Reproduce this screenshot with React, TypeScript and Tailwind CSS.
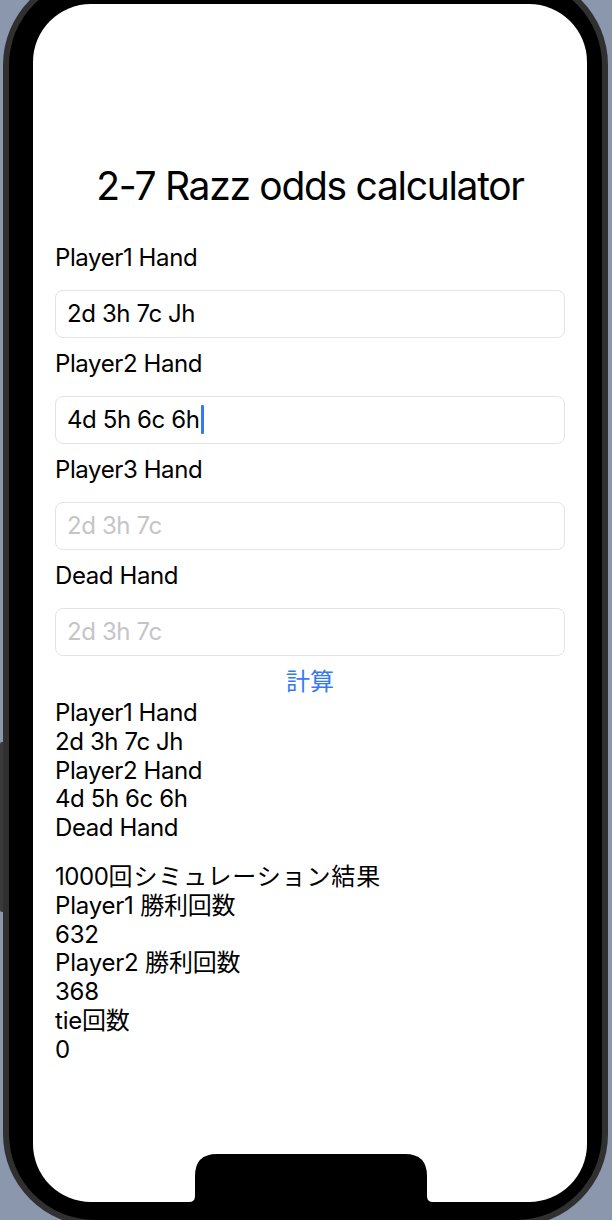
import React from "react";

const font = { fontFamily: '"Inter", "Noto Sans CJK JP", sans-serif' };

function Label({ children }: { children: React.ReactNode }) {
  return <div className="text-[24px] leading-[29px] tracking-[-0.4px] text-black">{children}</div>;
}

function Field({ value, placeholder, cursor }: { value?: string; placeholder: string; cursor?: boolean }) {
  return (
    <div className="mt-[17.5px] mb-[11.5px] flex h-[48px] items-center rounded-[8px] border border-[#e3e3e6] bg-white pl-[11px]">
      {value ? (
        <span className="text-[24px] leading-[29px] tracking-[-0.4px] text-black">{value}</span>
      ) : (
        <span className="text-[24px] leading-[29px] tracking-[-0.4px] text-[#c5c5c8]">{placeholder}</span>
      )}
      {cursor && <span className="ml-[1px] inline-block h-[29px] w-[3px] rounded-[1px] bg-[#3478f6]" />}
    </div>
  );
}

export default function App() {
  const results1 = ["Player1 Hand", "2d 3h 7c Jh", "Player2 Hand", "4d 5h 6c 6h", "Dead Hand"];
  const results2 = ["Player1 勝利回数", "632", "Player2 勝利回数", "368", "tie回数", "0"];
  return (
    <div className="relative h-[1220px] w-[612px] overflow-hidden bg-[#8a97ac]" style={font}>
      <div className="absolute left-0 top-[742px] h-[170px] w-[4px] rounded-l-[2px] bg-[#3a3a3a]" />
      <div className="relative ml-[3px] mt-[-27px] h-[1253px] w-[605px] rounded-[92px] bg-[#303030] p-[6px]">
        <div className="h-full w-full rounded-[86px] bg-black pl-[24px] pr-[15px] pt-[25px]">
          <div className="relative flex h-[1198px] w-[554px] flex-col overflow-hidden rounded-[58px] bg-white px-[22px]">
            <div className="mt-[158px] text-center text-[39px] leading-[48px] tracking-[-1.3px] text-black">2-7 Razz odds calculator</div>
            <div className="mt-[33px]">
              <Label>Player1 Hand</Label>
              <Field value="2d 3h 7c Jh" placeholder="2d 3h 7c" />
              <Label>Player2 Hand</Label>
              <Field value="4d 5h 6c 6h" placeholder="2d 3h 7c" cursor />
              <Label>Player3 Hand</Label>
              <Field placeholder="2d 3h 7c" />
              <Label>Dead Hand</Label>
              <Field placeholder="2d 3h 7c" />
            </div>
            <div className="text-center text-[24px] leading-[29px] text-[#3478f6]">計算</div>
            <div className="mt-[3px]">
              {results1.map((t, i) => (
                <div key={i} className="text-[24px] leading-[28.8px] tracking-[-0.4px] text-black">{t}</div>
              ))}
            </div>
            <div className="mt-[20px]">
              <div className="text-[24px] leading-[28.8px] text-black">
                <span className="tracking-[-0.4px]">1000</span>
                <span className="tracking-[0.85px]">回シミュレーション結果</span>
              </div>
              {results2.map((t, i) => (
                <div key={i} className="text-[24px] leading-[28.8px] tracking-[-0.2px] text-black">{t}</div>
              ))}
            </div>
            <svg className="absolute bottom-0 left-[156px]" width="244" height="48" viewBox="0 0 244 48">
              <path d="M0 48 Q6 48 6 42 L6 22 Q6 0 28 0 L216 0 Q238 0 238 22 L238 42 Q238 48 244 48 Z" fill="#000" />
            </svg>
          </div>
        </div>
      </div>
    </div>
  );
}
